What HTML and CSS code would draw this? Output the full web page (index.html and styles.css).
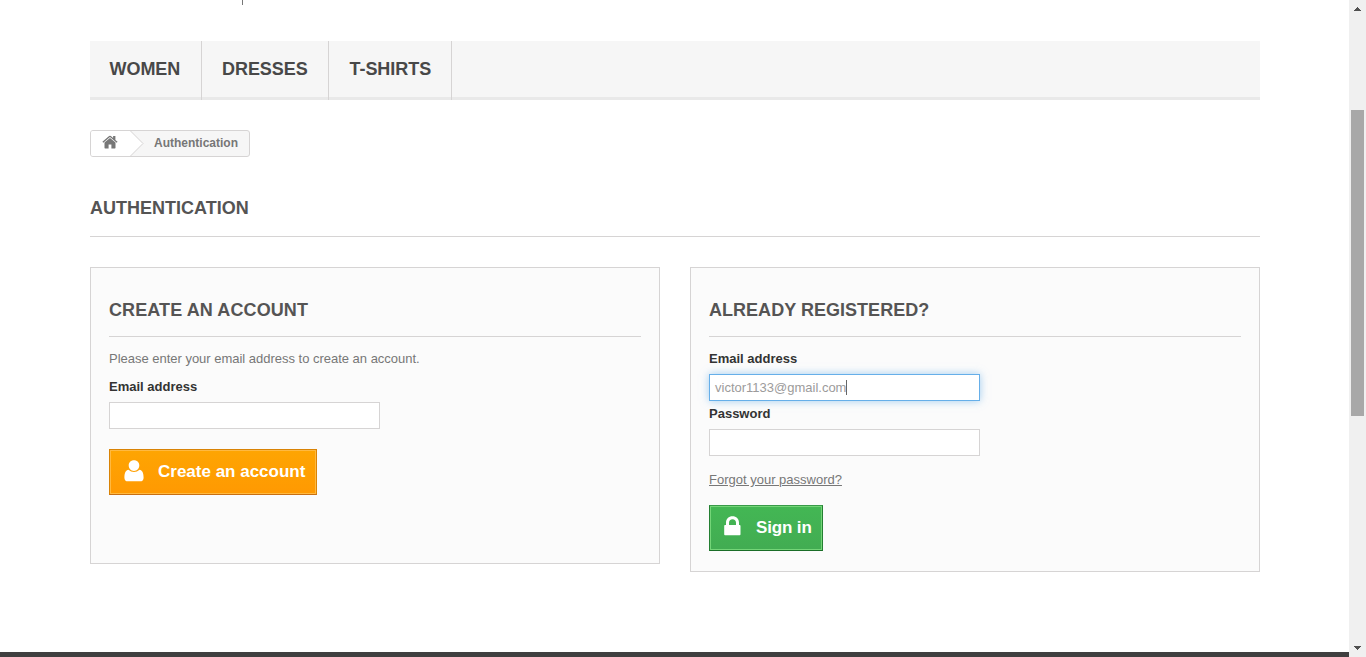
FILE: index.html
```html
<!DOCTYPE html>
<html lang="en">
<head>
<meta charset="utf-8">
<title>Authentication</title>
<link rel="stylesheet" href="styles.css">
</head>
<body>
<div class="window">
  <div class="page">
    <div class="container">
      <header class="header"><span class="logo-tail"></span></header>
      <nav class="menu">
        <a class="menu-item women">Women</a>
        <a class="menu-item dresses">Dresses</a>
        <a class="menu-item tshirts">T-shirts</a>
      </nav>
      <div class="breadcrumb">
        <svg class="crumb-home" width="54" height="25" viewBox="0 0 54 25">
          <path fill="#fff" d="M0 0H39.500L52 12.500L39.500 25H0z"/>
          <path fill="none" stroke="#d6d4d4" d="M39.500 0L52 12.500L39.500 25"/>
          <path fill="#777" transform="translate(-0.500 -0.400)" d="M19.500 7.300L25 11.900V17.200Q25 17.800 24.400 17.800H20.900V13.800H18.100V17.800H14.600Q14 17.800 14 17.200V11.900zM11.900 11.200L18.600 5.500Q19.500 4.800 20.400 5.500L22.600 7.400V5.500H24.900V9.300L27.100 11.200L26.200 12.100L19.500 6.500L12.800 12.100z"/>
        </svg>
        <span class="crumb-page">Authentication</span>
      </div>
      <h1 class="page-heading">Authentication</h1>
      <main class="columns">
        <form class="box create-box">
          <h3 class="subheading create-heading">Create an account</h3>
          <p class="intro">Please enter your email address to create an account.</p>
          <div class="label">Email address</div>
          <div class="field"></div>
          <div class="button create-button">
            <svg width="20" height="22" viewBox="0 0 20 22"><path fill="#fff" d="M10 0.300C13.100 0.300 15.300 2.500 15.300 5.500S13.100 10.900 10 10.900S4.700 8.500 4.700 5.500S6.900 0.300 10 0.300zM4.500 9.800Q7 12 10 12T15.500 9.800C18.300 10.300 19.600 12.900 19.600 17.700C19.600 20.200 18.300 21.300 16.200 21.300H3.800C1.700 21.300 0.400 20.200 0.400 17.700C0.400 12.900 1.700 10.300 4.500 9.800z"/></svg>
            <span>Create an account</span>
          </div>
        </form>
        <form class="box login-box">
          <h3 class="subheading login-heading">Already registered?</h3>
          <div class="label">Email address</div>
          <div class="field focused"><span>victor1133@gmail.com</span><i class="caret"></i></div>
          <div class="label">Password</div>
          <div class="field"></div>
          <a class="forgot">Forgot your password?</a>
          <div class="button signin-button">
            <svg class="lock" width="17" height="20" viewBox="0 0 17 20"><path fill="#fff" fill-rule="evenodd" d="M1 9H2V6.700C2 2.900 4.700 0.300 8.500 0.300S15 2.900 15 6.700V9H15.700Q16.500 9 16.500 10V18.300Q16.500 19.200 15.700 19.200H1Q0.200 19.200 0.200 18.300V10Q0.200 9 1 9zM5 9H12V6.700C12 4.600 10.600 3.300 8.500 3.300S5 4.600 5 6.700z"/></svg>
            <span>Sign in</span>
          </div>
        </form>
      </main>
    </div>
    <footer class="footer"></footer>
  </div>
  <aside class="scrollbar">
    <svg class="arrow" width="7" height="4" viewBox="0 0 7 4" shape-rendering="crispEdges"><path fill="#505050" d="M3 0h1v1h1v1h1v1h1v1H0V3h1V2h1V1h1z"/></svg>
    <div class="thumb"></div>
    <svg class="arrow" width="7" height="4" viewBox="0 0 7 4" shape-rendering="crispEdges"><path fill="#505050" d="M0 0h7v1H6v1H5v1H4v1H3V3H2V2H1V1H0z"/></svg>
  </aside>
</div>
</body>
</html>
```
FILE: styles.css
```css
* { box-sizing: border-box; }
body { margin: 0; background: #fff; color: #777; font: 13px/18px "Liberation Sans", Arial, sans-serif; }
.window { display: flex; height: 657px; overflow: hidden; }
.page { display: flex; flex-direction: column; width: 1349px; }
.container { width: 1170px; margin-left: 90px; flex: 1; }
.header { height: 41px; padding-left: 152px; }
.logo-tail { display: block; width: 1px; height: 5px; background: #777; }
.menu { display: flex; height: 59px; background: #f6f6f6; border-bottom: 3px solid #e9e9e9; }
.menu-item { height: 59px; padding: 17px 0 0 20px; border-right: 1px solid #d6d4d4; color: #484848; font-weight: bold; font-size: 18px; line-height: 22px; letter-spacing: -0.05px; text-transform: uppercase; white-space: nowrap; }
.women { width: 112px; padding-left: 19.500px; }
.dresses { width: 127px; }
.tshirts { width: 123px; padding-left: 20.500px; }
.breadcrumb { display: flex; width: 160px; height: 27px; margin-top: 30px; border: 1px solid #d6d4d4; border-radius: 3px; background: #f6f6f6; overflow: hidden; font-weight: bold; font-size: 12px; line-height: 24px; }
.crumb-home { flex: none; }
.crumb-page { padding-left: 9px; }
.page-heading { height: 40px; margin: 40px 0 30px; border-bottom: 1px solid #d6d4d4; color: #555454; font-size: 18px; line-height: 22px; letter-spacing: 0; text-transform: uppercase; }
.columns { display: flex; align-items: flex-start; gap: 30px; }
.box { width: 570px; padding: 31px 18px 0; background: #fbfbfb; border: 1px solid #d6d4d4; }
.create-box { height: 297px; }
.login-box { height: 305px; }
.subheading { height: 38px; margin: 0 0 13px; border-bottom: 1px solid #d6d4d4; color: #555454; font-size: 18px; line-height: 22px; text-transform: uppercase; }
.create-heading { letter-spacing: 0.1px; }
.login-heading { letter-spacing: 0.03px; }
.intro { margin: 0 0 10px; letter-spacing: -0.015px; }
.label { height: 24px; color: #333; font-weight: bold; }
.field { display: flex; align-items: center; width: 271px; height: 27px; padding: 0 5px; border: 1px solid #d6d4d4; background: #fff; color: #9c9b9b; }
.focused { margin-bottom: 4px; border-color: #66afe9; box-shadow: 0 0 8px rgba(102, 175, 233, 0.6); }
.caret { width: 1px; height: 15px; background: #666; }
.forgot { display: block; width: max-content; margin-top: 15px; text-decoration: underline; }
.button { display: flex; align-items: center; height: 46px; padding: 0 0 2px 14px; color: #fff; font-weight: bold; font-size: 17px; line-height: 21px; white-space: nowrap; }
.create-button { width: 208px; margin-top: 20px; gap: 14px; border: 1px solid; border-color: #d98305 #d98305 #c86f12; background: linear-gradient(#fea502, #ff9902); box-shadow: inset 0 0 0 1px #ffb940; }
.signin-button { width: 114px; margin-top: 16px; gap: 15px; border: 1px solid; border-color: #399a49 #247f32 #1a6d27; background: linear-gradient(#43b754, #42ac52); box-shadow: inset 0 0 0 1px #74d578; letter-spacing: -0.15px; }
.lock { margin-bottom: 2px; }
.footer { height: 5px; background: #3f3f3f; }
.scrollbar { display: flex; flex-direction: column; align-items: center; width: 17px; padding: 7px 0; background: #f0f0f0; }
.thumb { width: 13px; height: 306px; margin: 99px 0 230px; background: #a8a8a8; }
.arrow { flex: none; }
```
